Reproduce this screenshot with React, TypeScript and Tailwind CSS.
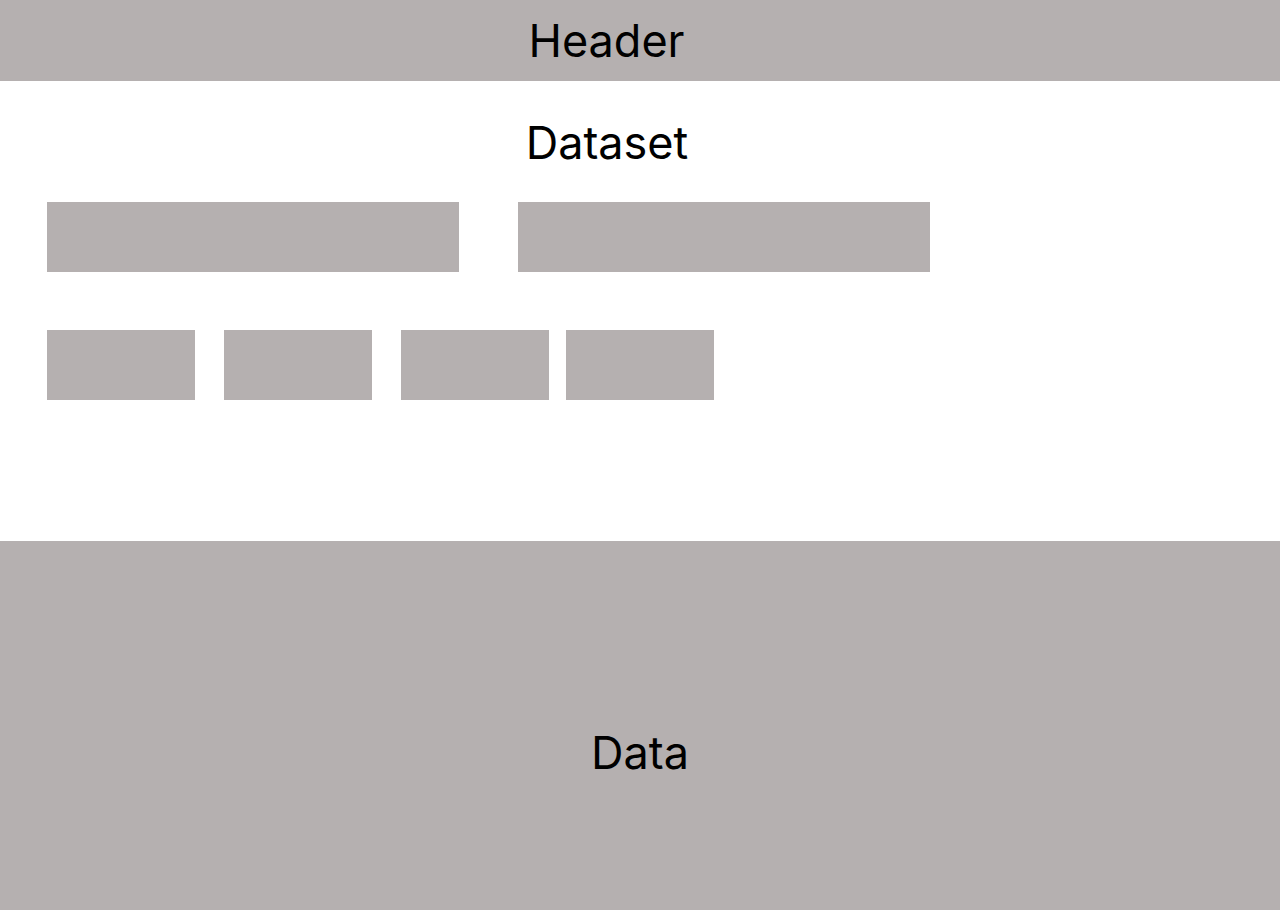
export default function App() {
  return (
    <div className="w-[1280px] h-[910px] flex flex-col bg-white overflow-hidden font-['Inter',sans-serif]">
      {/* Header bar */}
      <header className="h-[81px] shrink-0 bg-[#b5b0b0] flex items-center justify-center pr-[67px]">
        <span className="text-[45px] leading-none text-black">Header</span>
      </header>

      {/* Dataset controls */}
      <section className="flex-1 flex flex-col">
        <h1 className="mt-[39px] text-center pr-[66px] text-[45px] leading-none text-black">
          Dataset
        </h1>
        <div className="mt-[37px] pl-[47px] flex gap-[59px]">
          <div className="w-[412px] h-[70px] bg-[#b5b0b0]" />
          <div className="w-[412px] h-[70px] bg-[#b5b0b0]" />
        </div>
        <div className="mt-[58px] pl-[47px] flex">
          <div className="w-[148px] h-[70px] bg-[#b5b0b0]" />
          <div className="ml-[29px] w-[148px] h-[70px] bg-[#b5b0b0]" />
          <div className="ml-[29px] w-[148px] h-[70px] bg-[#b5b0b0]" />
          <div className="ml-[17px] w-[148px] h-[70px] bg-[#b5b0b0]" />
        </div>
      </section>

      {/* Data area */}
      <section className="h-[369px] shrink-0 bg-[#b5b0b0] flex justify-center pt-[189px]">
        <span className="text-[45px] leading-none text-black">Data</span>
      </section>
    </div>
  );
}
